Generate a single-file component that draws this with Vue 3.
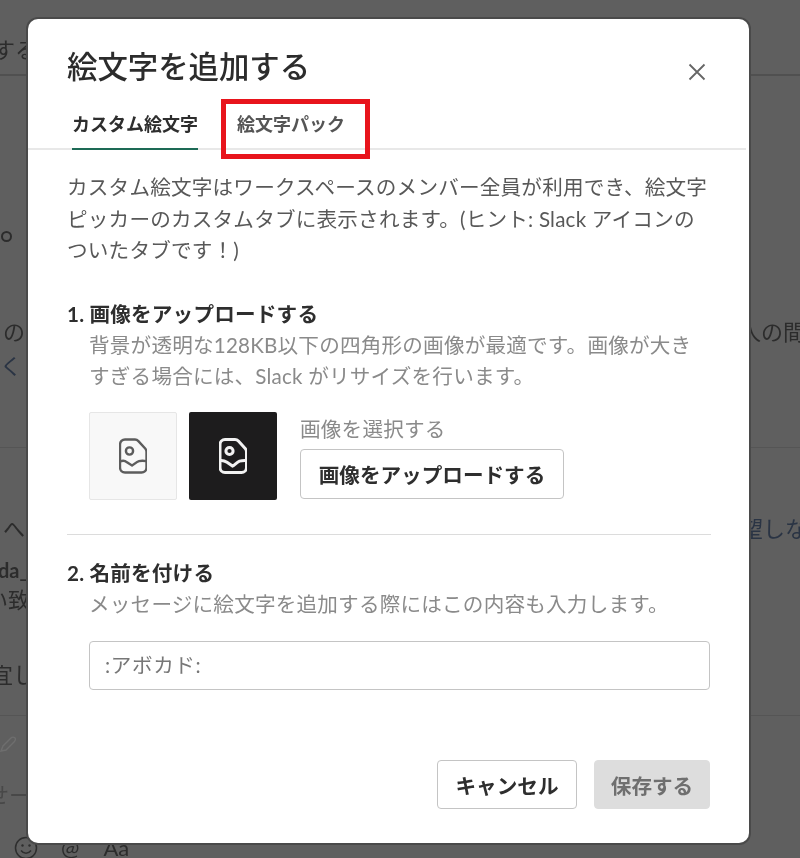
<template>
  <div class="page">
    <div class="backdrop">
      <div class="bg-row row-top"><span class="frag-left suru">する</span></div>
      <div class="bg-row row-circle"><span class="circle"></span></div>
      <div class="bg-row row-people">
        <span class="frag-left no">の</span>
        <span class="frag-right people">人の間</span>
      </div>
      <div class="bg-row row-link"><span class="frag-left link">く</span></div>
      <div class="bg-row row-wish">
        <span class="frag-left he">へ</span>
        <span class="frag-right link wish">望しな</span>
      </div>
      <div class="bg-row row-name"><span class="frag-left bold">da_</span></div>
      <div class="bg-row row-match"><span class="frag-left match">い致</span></div>
      <div class="bg-row row-please"><span class="frag-left please">宜し</span></div>
      <div class="bg-row row-rule"></div>
      <div class="bg-row row-pencil">
        <svg width="16" height="18" viewBox="0 0 16 18" fill="none" stroke="#6e6e6e" stroke-width="1.4">
          <path d="M1 15l2-5 8-8c1-1 3-1 4 0s0 3-1 4l-8 8z" />
        </svg>
      </div>
      <div class="bg-row row-input"><span class="frag-left faint">せー</span></div>
      <div class="bg-tools">
        <svg width="24" height="24" viewBox="0 0 24 24" fill="none" stroke="#2e2e2e" stroke-width="1.500">
          <circle cx="12" cy="12" r="10.500" />
          <circle cx="8.500" cy="9.500" r="1.200" fill="#2e2e2e" stroke="none" />
          <circle cx="15.500" cy="9.500" r="1.200" fill="#2e2e2e" stroke="none" />
          <path d="M7 14.500c2.500 3.500 7.500 3.500 10 0" />
        </svg>
        <span class="tool-at">@</span>
        <span class="tool-aa">Aa</span>
      </div>
    </div>

    <div class="overlay">
      <section class="modal">
        <header class="modal-head">
          <h1>絵文字を追加する</h1>
          <svg class="close" width="18" height="18" viewBox="0 0 18 18" fill="none" stroke="#666" stroke-width="1.800">
            <path d="M1.500 1.500l15 15M16.500 1.500l-15 15" />
          </svg>
        </header>

        <nav class="tabs">
          <span class="tab active">カスタム絵文字</span>
          <span class="tab">絵文字パック</span>
          <span class="highlight"></span>
        </nav>

        <div class="modal-body">
          <p class="intro">カスタム絵文字はワークスペースのメンバー全員が利用でき、絵文字<br />ピッカーのカスタムタブに表示されます。(ヒント: Slack アイコンの<br />ついたタブです！)</p>

          <h2 class="step-title">1. 画像をアップロードする</h2>
          <p class="hint">背景が透明な128KB以下の四角形の画像が最適です。画像が大き<br />すぎる場合には、Slack がリサイズを行います。</p>

          <div class="upload">
            <div class="swatch light">
              <svg width="28" height="36" viewBox="0 0 28 36" fill="none" stroke="#5c5c5c" stroke-width="2.400">
                <path d="M6 1.500h10c1.400 0 2.400.5 3.400 1.600l6.800 7.400c.9 1 1.300 2 1.300 3.300V29.500a5 5 0 0 1-5 5H6a5 5 0 0 1-5-5V6.500a5 5 0 0 1 5-5z" />
                <circle cx="10.500" cy="13" r="3.600" />
                <path d="M1 23.500c3-1.500 5-1 7 .8l5 3.200c2-.6 4-3.600 7-4.400 2.500-.6 5-.4 7.500 0" />
              </svg>
            </div>
            <div class="swatch dark">
              <svg width="28" height="36" viewBox="0 0 28 36" fill="none" stroke="#f2f2f2" stroke-width="3">
                <path d="M6 1.500h10c1.400 0 2.400.5 3.400 1.600l6.800 7.400c.9 1 1.300 2 1.300 3.300V29.500a5 5 0 0 1-5 5H6a5 5 0 0 1-5-5V6.500a5 5 0 0 1 5-5z" />
                <circle cx="10.500" cy="13" r="3.600" />
                <path d="M1 22.500c3-.4 5 .4 7 1.800l5.500 3.700c2-.8 4-3.600 7-4.800 2.300-.8 5-.8 7-.7" />
              </svg>
            </div>
            <div class="picker">
              <span class="picker-label">画像を選択する</span>
              <button class="btn upload-btn">画像をアップロードする</button>
            </div>
          </div>

          <hr class="divider" />

          <h2 class="step-title">2. 名前を付ける</h2>
          <p class="hint">メッセージに絵文字を追加する際にはこの内容も入力します。</p>
          <div class="name-input">:アボカド:</div>
        </div>

        <footer class="modal-foot">
          <button class="btn cancel">キャンセル</button>
          <button class="btn save">保存する</button>
        </footer>
      </section>
    </div>
  </div>
</template>

<script setup>
</script>

<style>
html,
body {
  margin: 0;
  background: #5f5f5f;
}
</style>

<style scoped>
.page {
  position: relative;
  width: 800px;
  height: 858px;
  overflow: hidden;
  background: #5f5f5f;
  font-family: Lato, "Noto Sans CJK JP", sans-serif;
  color: #333;
  filter: blur(0.45px);
}

.backdrop {
  display: flex;
  flex-direction: column;
  color: #2c2c2c;
  font-size: 22px;
  line-height: 30px;
}

.bg-row {
  display: flex;
  flex-shrink: 0;
  justify-content: space-between;
  box-sizing: border-box;
}

.row-top {
  height: 76px;
  padding-top: 35px;
  border-bottom: 2px solid #505050;
}

.row-circle {
  height: 167px;
  align-items: flex-end;
}

.circle {
  width: 7px;
  height: 7px;
  margin: 0 0 1px 1px;
  border: 2px solid #2c2c2c;
  border-radius: 50%;
}

.row-people {
  height: 104px;
  align-items: flex-end;
}

.row-link {
  height: 101px;
  padding-top: 4px;
  border-bottom: 1px solid #555;
}

.row-wish {
  height: 96px;
  align-items: flex-end;
}

.row-name {
  height: 41px;
  align-items: flex-end;
}

.row-match {
  height: 30px;
  align-items: flex-end;
}

.row-please {
  height: 75px;
  align-items: flex-end;
}

.row-rule {
  height: 26px;
  border-bottom: 1px solid #555;
}

.row-pencil {
  height: 44px;
  align-items: flex-end;
  padding-bottom: 6px;
}

.row-input {
  height: 50px;
  align-items: flex-end;
}

.suru {
  margin-left: -7px;
}

.no {
  margin-left: 3px;
}

.he {
  margin-left: 3px;
}

.match {
  margin-left: -14px;
}

.please {
  margin-left: -9px;
}

.frag-right {
  margin-left: auto;
}

.people {
  margin-right: -5px;
}

.wish {
  margin-right: -7px;
}

.link {
  color: #2a3444;
}

.bold {
  font-size: 20px;
  font-weight: 700;
  margin-left: -2px;
}

.faint {
  margin-left: -13px;
  color: #484848;
}

.bg-tools {
  display: flex;
  flex-shrink: 0;
  align-items: center;
  gap: 23px;
  height: 24px;
  margin-top: 26px;
  padding-left: 14px;
  color: #2c2c2c;
}

.tool-aa {
  margin-left: 1px;
  font-size: 22px;
}

.overlay {
  position: absolute;
  inset: 0;
  padding: 19px 0 0 28px;
}

.modal {
  display: flex;
  flex-direction: column;
  box-sizing: border-box;
  width: 721px;
  height: 824px;
  background: #fff;
  border-radius: 10px;
  box-shadow: 0 0 0 2px #4a4a4a;
}

.modal-head {
  display: flex;
  justify-content: space-between;
  align-items: center;
  height: 84px;
  padding: 0 43px 0 39px;
  box-sizing: border-box;
}

h1 {
  margin: 10px 0 0;
  font-size: 30.4px;
  font-weight: 500;
  line-height: 76px;
  color: #2c2c2c;
}

.close {
  margin-top: 22px;
}

.tabs {
  position: relative;
  display: flex;
  gap: 39px;
  height: 45px;
  padding-left: 44px;
  margin-right: 3px;
  border-bottom: 2px solid #e8e8e8;
  font-size: 18px;
  font-weight: 700;
  color: #555;
}

.tab {
  height: 45px;
  line-height: 42px;
}

.tab.active {
  color: #2e2e2e;
  border-bottom: 2px solid #1d6a55;
}

.highlight {
  position: absolute;
  left: 193px;
  top: -4px;
  width: 149px;
  height: 60px;
  box-sizing: border-box;
  border: 5px solid #e8141c;
}

.modal-body {
  flex: 1;
  padding: 22px 38px 0 39px;
  font-size: 20.6px;
  letter-spacing: 0.2px;
}

.intro {
  margin: 0 0 32px;
  line-height: 31.5px;
  color: #585858;
}

.step-title {
  margin: 0;
  font-size: 20.6px;
  font-weight: 700;
  line-height: 31px;
  color: #2e2e2e;
}

.hint {
  margin: 0 0 0 22px;
  line-height: 31px;
  color: #8a8a8a;
}

.upload {
  display: flex;
  gap: 12px;
  margin: 20px 0 34px 22px;
}

.swatch {
  display: flex;
  align-items: center;
  justify-content: center;
  width: 88px;
  height: 88px;
  box-sizing: border-box;
  border-radius: 2px;
}

.swatch.light {
  background: #f8f8f8;
  border: 1px solid #e6e6e6;
}

.swatch.dark {
  background: #1d1c1d;
}

.picker {
  display: flex;
  flex-direction: column;
  justify-content: flex-end;
  align-items: flex-start;
  padding-bottom: 1px;
  margin-left: 11px;
}

.picker-label {
  margin-bottom: 3px;
  line-height: 34px;
  color: #8a8a8a;
}

.btn {
  box-sizing: border-box;
  border-radius: 4px;
  font-family: inherit;
  font-size: 20.6px;
  font-weight: 700;
  letter-spacing: 0;
  background: #fff;
  border: 1.500px solid #c4c4c4;
  color: #2e2e2e;
  padding: 0;
}

.upload-btn {
  width: 264px;
  height: 50px;
}

.divider {
  height: 1px;
  margin: 0 0 23px;
  border: 0;
  background: #dcdcdc;
}

.name-input {
  box-sizing: border-box;
  height: 49px;
  margin: 21px 1px 0 22px;
  padding-left: 15px;
  line-height: 46px;
  border: 1.500px solid #c4c4c4;
  border-radius: 4px;
  color: #777;
  letter-spacing: 0.6px;
}

.modal-foot {
  display: flex;
  justify-content: flex-end;
  gap: 17px;
  padding: 0 39px 34px 0;
}

.cancel {
  width: 140px;
  height: 49px;
}

.save {
  width: 116px;
  height: 49px;
  background: #dddddd;
  border-color: #dddddd;
  color: #6f6f6f;
}
</style>
